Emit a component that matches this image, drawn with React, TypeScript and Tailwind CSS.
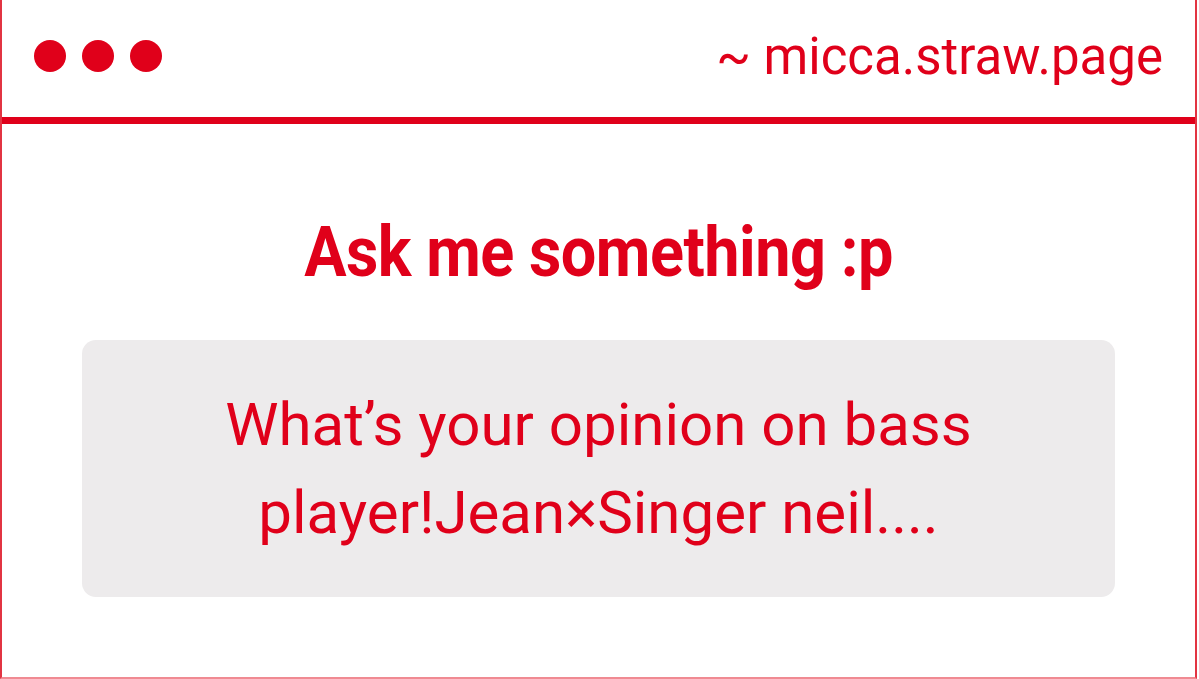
const red = "text-[#e0001a]";

function Dots() {
  return (
    <div className="flex gap-4">
      <span className="block w-8 h-8 rounded-full bg-[#e0001a]" />
      <span className="block w-8 h-8 rounded-full bg-[#e0001a]" />
      <span className="block w-8 h-8 rounded-full bg-[#e0001a]" />
    </div>
  );
}

export default function App() {
  return (
    <div className="w-[1199px] h-[679px] bg-white" style={{ fontFamily: "Roboto, 'Liberation Sans', sans-serif" }}>
      <div className="w-[1197px] h-[679px] flex flex-col border-l-2 border-r-2 border-b-2 border-l-[#e23442] border-r-[#e23442] border-b-[#f08a92]">
        <header className="h-[124px] flex items-center justify-between pl-8 pr-8 pb-[5px] border-b-[7px] border-[#e0001a]">
          <Dots />
          <span className={`${red} text-[51px] leading-none`}>~ micca.straw.page</span>
        </header>
        <main className="flex-1 flex flex-col items-center pt-[96px]">
          <h1 className={`${red} text-[63px] font-bold leading-none tracking-[-0.5px] scale-y-[1.12]`}>Ask me something :p</h1>
          <div className="mt-[57px] w-[1033px] h-[257px] rounded-[14px] bg-[#edebec] flex items-center justify-center">
            <p className={`${red} text-[60px] leading-[88px] text-center`}>
              What’s your opinion on bass
              <br />
              player!Jean×Singer neil....
            </p>
          </div>
        </main>
      </div>
    </div>
  );
}
